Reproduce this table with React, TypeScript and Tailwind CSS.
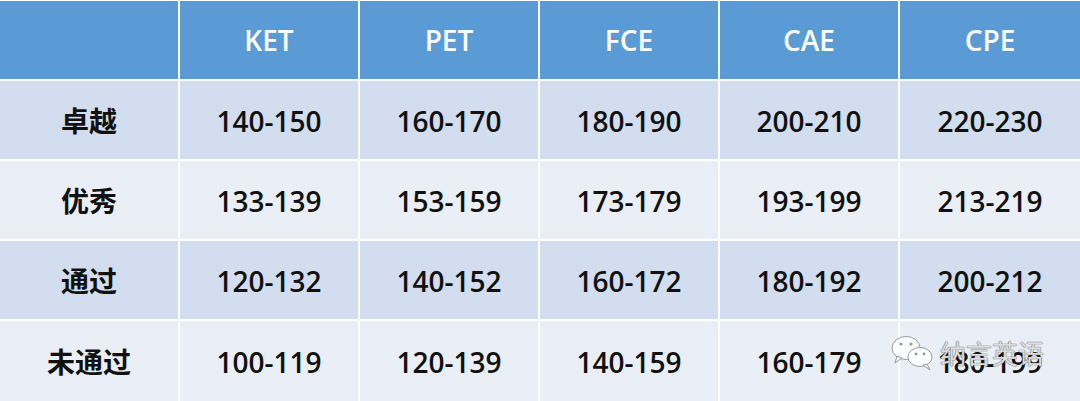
import React from 'react';

const headers = ['', 'KET', 'PET', 'FCE', 'CAE', 'CPE'];

const rows = [
  { label: '卓越', values: ['140-150', '160-170', '180-190', '200-210', '220-230'] },
  { label: '优秀', values: ['133-139', '153-159', '173-179', '193-199', '213-219'] },
  { label: '通过', values: ['120-132', '140-152', '160-172', '180-192', '200-212'] },
  { label: '未通过', values: ['100-119', '120-139', '140-159', '160-179', '180-199'] },
];

const font = { fontFamily: '"Open Sans", "Noto Sans CJK SC", sans-serif' };

// watermark in the bottom right corner
function WeChatMark() {
  return (
    <div className="absolute left-[890px] top-[333px] flex items-center gap-[4px] pointer-events-none">
      <svg width="46" height="40" viewBox="0 0 46 40">
        <ellipse cx="16" cy="15" rx="14" ry="11.5" fill="white" fillOpacity="0.85" stroke="#9a9a9a" strokeWidth="1" />
        <path d="M7 23 L5 30 L12 25 Z" fill="white" fillOpacity="0.85" stroke="#9a9a9a" strokeWidth="1" />
        <circle cx="11" cy="11" r="1.6" fill="#9a9a9a" />
        <circle cx="21" cy="11" r="1.6" fill="#9a9a9a" />
        <ellipse cx="30" cy="24" rx="12" ry="9.5" fill="white" fillOpacity="0.9" stroke="#9a9a9a" strokeWidth="1" />
        <path d="M37 31 L40 37 L33 32 Z" fill="white" fillOpacity="0.9" stroke="#9a9a9a" strokeWidth="1" />
        <circle cx="26" cy="21" r="1.4" fill="#9a9a9a" />
        <circle cx="34" cy="21" r="1.4" fill="#9a9a9a" />
      </svg>
      <span
        className="text-[26px] leading-none text-white/80 [text-shadow:0_0_1px_#555,0_0_1px_#555]"
        style={{ fontFamily: '"Noto Sans CJK SC", sans-serif' }}
      >
        纳言英语
      </span>
    </div>
  );
}

export default function App() {
  return (
    <div className="relative w-[1080px] h-[401px] bg-white pt-[1px] overflow-hidden" style={font}>
      <div className="grid grid-cols-[178px_178px_178px_178px_178px_1fr] grid-rows-[78px_78px_78px_78px_1fr] gap-[2px] h-[400px]">
        {headers.map((h, i) => (
          <div
            key={`h${i}`}
            className="bg-[#5b9bd5] flex items-center justify-center text-white text-[28px] font-semibold"
          >
            {h}
          </div>
        ))}
        {rows.map((row, r) => {
          const bg = r % 2 === 0 ? 'bg-[#d2deef]' : 'bg-[#eaeff7]';
          return (
            <React.Fragment key={row.label}>
              <div className={`${bg} flex items-center justify-center pt-[2px] text-[28px] font-semibold text-[#111]`}>
                {row.label}
              </div>
              {row.values.map((v, c) => (
                <div
                  key={c}
                  className={`${bg} flex items-center justify-center pt-[2px] text-[28px] font-semibold text-[#111]`}
                >
                  {v}
                </div>
              ))}
            </React.Fragment>
          );
        })}
      </div>
      <WeChatMark />
    </div>
  );
}
